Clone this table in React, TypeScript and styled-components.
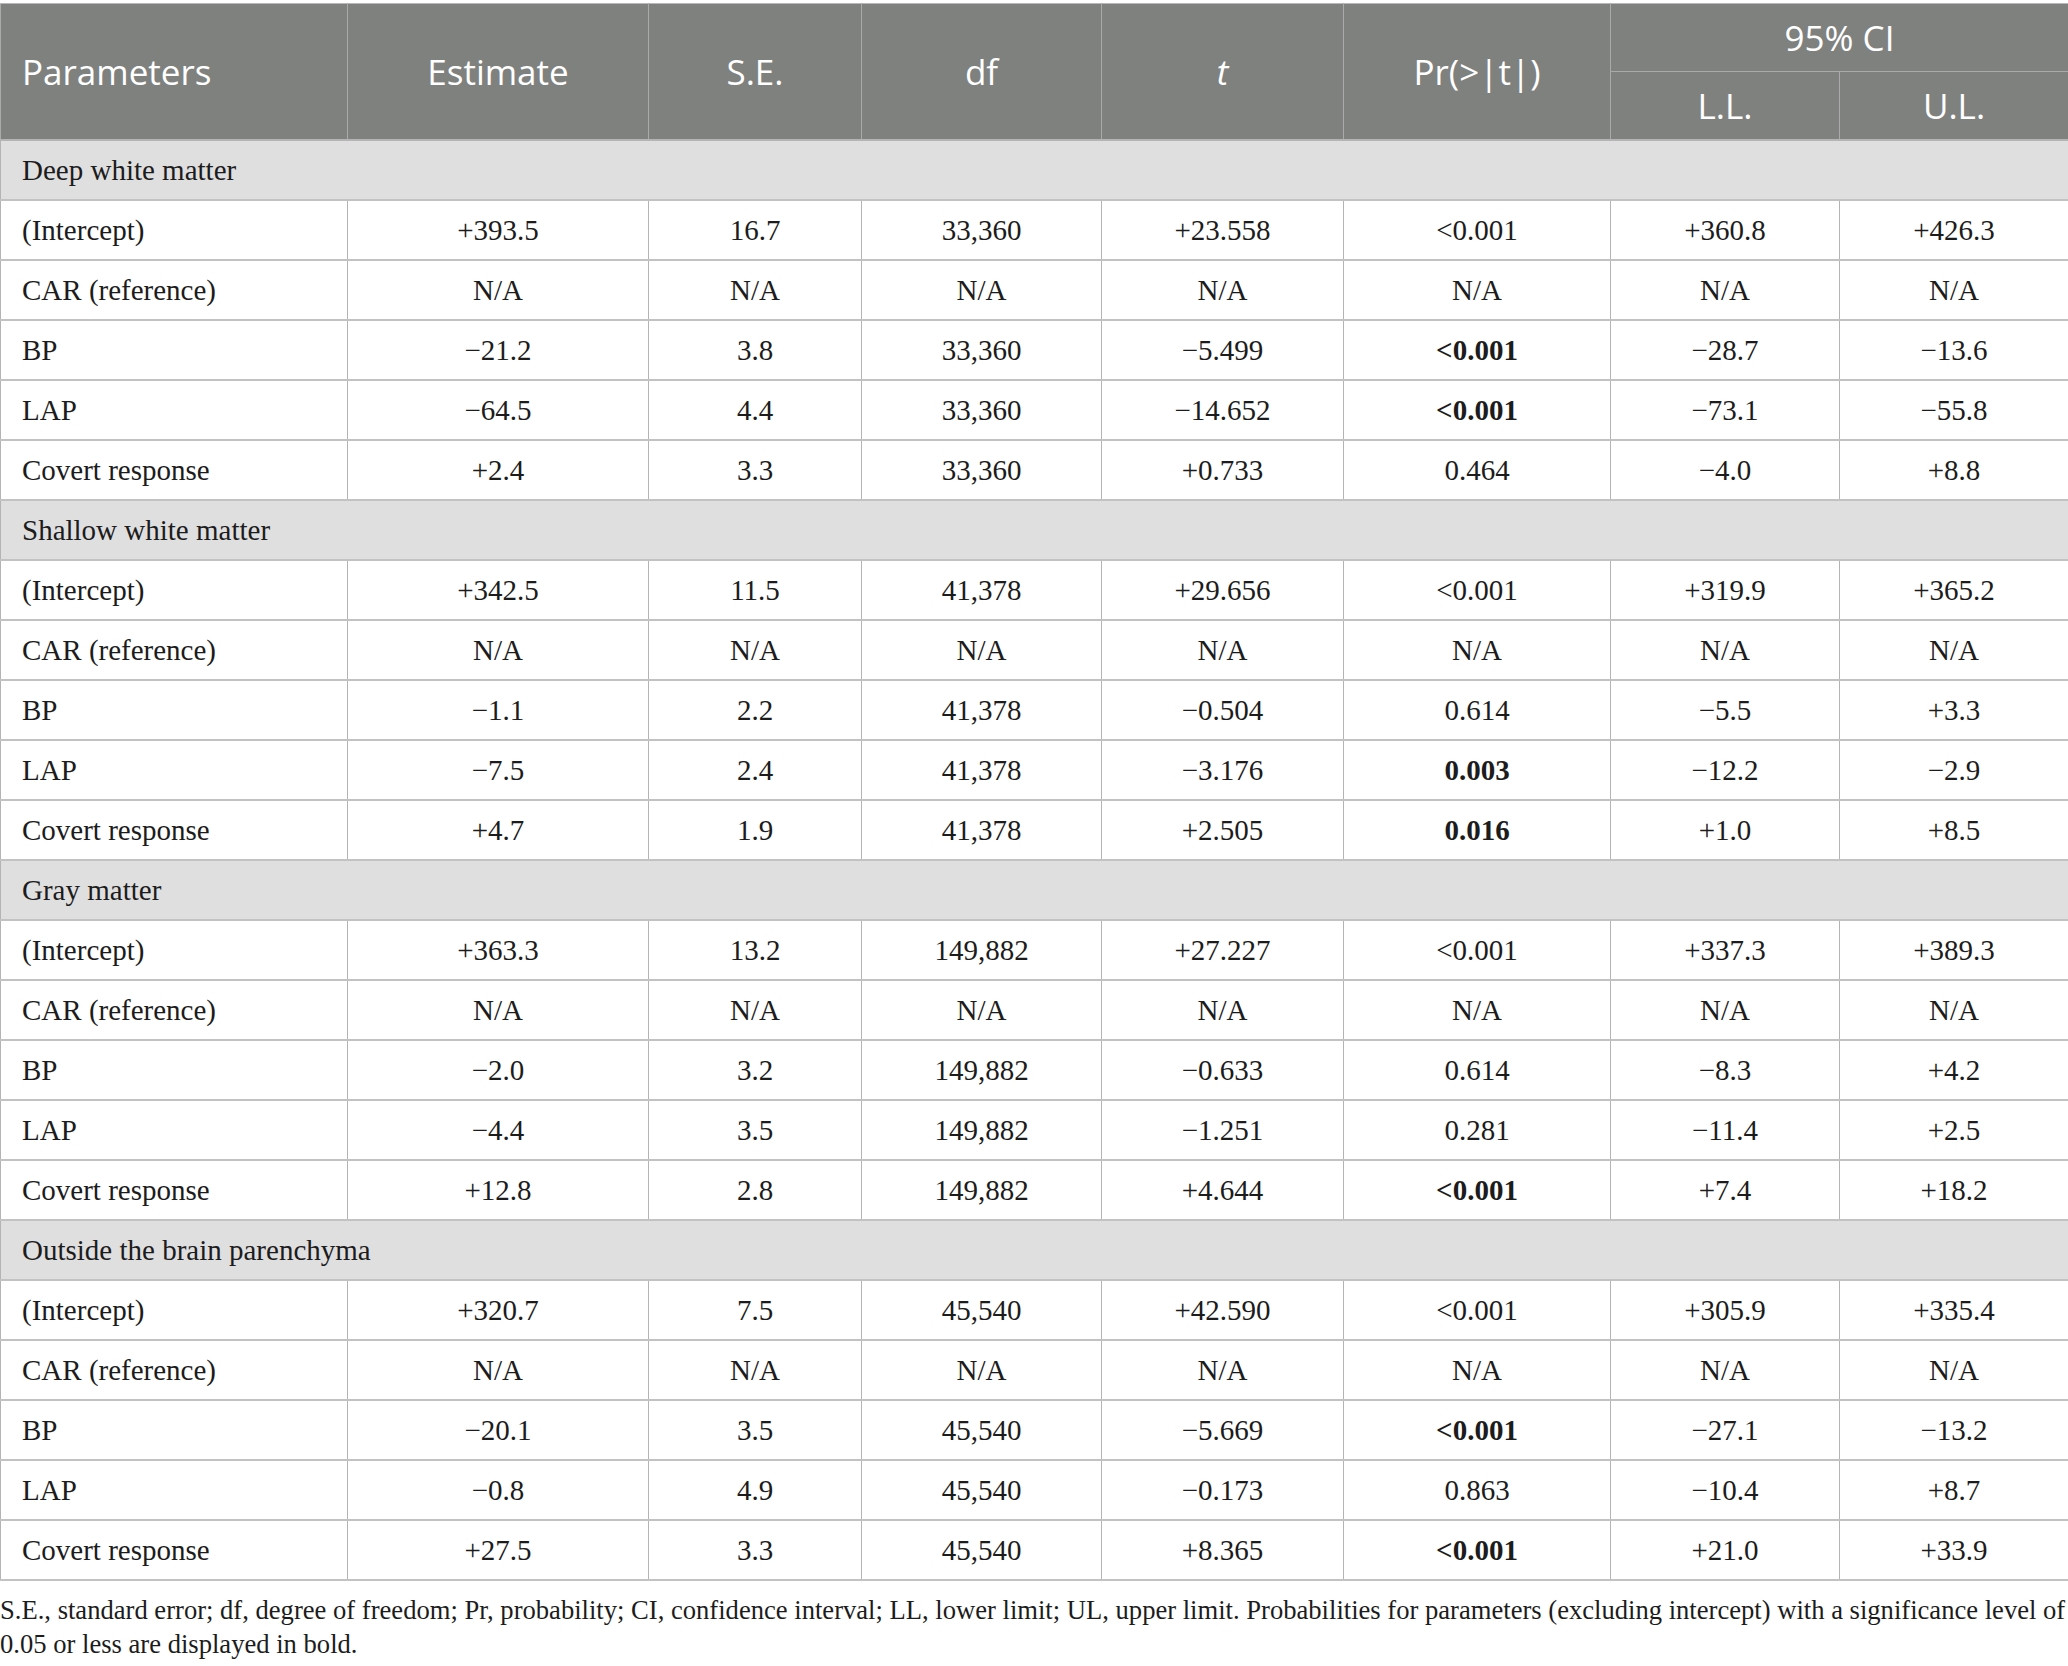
import React from "react";
import styled, { createGlobalStyle } from "styled-components";

const GlobalStyle = createGlobalStyle`
  html, body {
    margin: 0;
    padding: 0;
    background: #ffffff;
  }
`;

const Page = styled.div`
  width: 2068px;
  padding-top: 3px;
  background: #fff;
`;

const Table = styled.table`
  width: 2068px;
  border-collapse: collapse;
  table-layout: fixed;
  font-family: "Liberation Serif", "Times New Roman", serif;
  color: #1c1c1c;
`;

const HeadCell = styled.th<{ $left?: boolean; $italic?: boolean }>`
  background: #7f817f;
  color: #ffffff;
  font-family: "Open Sans", "Noto Sans", sans-serif;
  font-weight: 400;
  font-size: 35px;
  font-style: ${({ $italic }) => ($italic ? "italic" : "normal")};
  text-align: ${({ $left }) => ($left ? "left" : "center")};
  padding: 0 0 0 ${({ $left }) => ($left ? "21px" : "0")};
  border: 1px solid #a9aaa9;
  border-top-color: #b8b8b8;
  height: 67px;
  vertical-align: middle;
`;

const SectionRow = styled.tr`
  height: 60px;
`;

const SectionCell = styled.td`
  background: #e0dfe0;
  font-size: 29px;
  padding: 0 0 0 21px;
  border: 1px solid #b4b4b4;
  border-top-width: 2px;
  vertical-align: middle;
`;

const Row = styled.tr`
  height: 60px;
`;

const Cell = styled.td<{ $left?: boolean; $bold?: boolean }>`
  font-size: 29px;
  font-weight: ${({ $bold }) => ($bold ? 700 : 400)};
  text-align: ${({ $left }) => ($left ? "left" : "center")};
  padding: 0 0 0 ${({ $left }) => ($left ? "21px" : "0")};
  border-left: 1px solid #b4b4b4;
  border-right: 1px solid #b4b4b4;
  border-top: 2px solid #c2c2c2;
  border-bottom: 2px solid #c2c2c2;
  vertical-align: middle;
  white-space: nowrap;
`;

const Note = styled.p`
  margin: 12px 0 0 0;
  font-family: "Liberation Serif", "Times New Roman", serif;
  font-size: 26.6px;
  line-height: 34px;
  color: #1c1c1c;
  white-space: nowrap;
`;

type DataRow = {
  label: string;
  values: string[];
  boldP?: boolean;
};

type Section = {
  title: string;
  rows: DataRow[];
};

const NA = ["N/A", "N/A", "N/A", "N/A", "N/A", "N/A", "N/A"];

const sections: Section[] = [
  {
    title: "Deep white matter",
    rows: [
      { label: "(Intercept)", values: ["+393.5", "16.7", "33,360", "+23.558", "<0.001", "+360.8", "+426.3"] },
      { label: "CAR (reference)", values: NA },
      { label: "BP", values: ["\u221221.2", "3.8", "33,360", "\u22125.499", "<0.001", "\u221228.7", "\u221213.6"], boldP: true },
      { label: "LAP", values: ["\u221264.5", "4.4", "33,360", "\u221214.652", "<0.001", "\u221273.1", "\u221255.8"], boldP: true },
      { label: "Covert response", values: ["+2.4", "3.3", "33,360", "+0.733", "0.464", "\u22124.0", "+8.8"] },
    ],
  },
  {
    title: "Shallow white matter",
    rows: [
      { label: "(Intercept)", values: ["+342.5", "11.5", "41,378", "+29.656", "<0.001", "+319.9", "+365.2"] },
      { label: "CAR (reference)", values: NA },
      { label: "BP", values: ["\u22121.1", "2.2", "41,378", "\u22120.504", "0.614", "\u22125.5", "+3.3"] },
      { label: "LAP", values: ["\u22127.5", "2.4", "41,378", "\u22123.176", "0.003", "\u221212.2", "\u22122.9"], boldP: true },
      { label: "Covert response", values: ["+4.7", "1.9", "41,378", "+2.505", "0.016", "+1.0", "+8.5"], boldP: true },
    ],
  },
  {
    title: "Gray matter",
    rows: [
      { label: "(Intercept)", values: ["+363.3", "13.2", "149,882", "+27.227", "<0.001", "+337.3", "+389.3"] },
      { label: "CAR (reference)", values: NA },
      { label: "BP", values: ["\u22122.0", "3.2", "149,882", "\u22120.633", "0.614", "\u22128.3", "+4.2"] },
      { label: "LAP", values: ["\u22124.4", "3.5", "149,882", "\u22121.251", "0.281", "\u221211.4", "+2.5"] },
      { label: "Covert response", values: ["+12.8", "2.8", "149,882", "+4.644", "<0.001", "+7.4", "+18.2"], boldP: true },
    ],
  },
  {
    title: "Outside the brain parenchyma",
    rows: [
      { label: "(Intercept)", values: ["+320.7", "7.5", "45,540", "+42.590", "<0.001", "+305.9", "+335.4"] },
      { label: "CAR (reference)", values: NA },
      { label: "BP", values: ["\u221220.1", "3.5", "45,540", "\u22125.669", "<0.001", "\u221227.1", "\u221213.2"], boldP: true },
      { label: "LAP", values: ["\u22120.8", "4.9", "45,540", "\u22120.173", "0.863", "\u221210.4", "+8.7"] },
      { label: "Covert response", values: ["+27.5", "3.3", "45,540", "+8.365", "<0.001", "+21.0", "+33.9"], boldP: true },
    ],
  },
];

const colWidths = [347, 301, 213, 240, 242, 267, 229, 229];

const App: React.FC = () => {
  return (
    <Page>
      <GlobalStyle />
      <Table>
        <colgroup>
          {colWidths.map((w, i) => (
            <col key={i} style={{ width: w }} />
          ))}
        </colgroup>
        <thead>
          <tr>
            <HeadCell rowSpan={2} $left>Parameters</HeadCell>
            <HeadCell rowSpan={2}>Estimate</HeadCell>
            <HeadCell rowSpan={2}>S.E.</HeadCell>
            <HeadCell rowSpan={2}>df</HeadCell>
            <HeadCell rowSpan={2} $italic>t</HeadCell>
            <HeadCell rowSpan={2}>Pr(&gt;|t|)</HeadCell>
            <HeadCell colSpan={2}>95% CI</HeadCell>
          </tr>
          <tr>
            <HeadCell>L.L.</HeadCell>
            <HeadCell>U.L.</HeadCell>
          </tr>
        </thead>
        <tbody>
          {sections.map((section) => (
            <React.Fragment key={section.title}>
              <SectionRow>
                <SectionCell colSpan={8}>{section.title}</SectionCell>
              </SectionRow>
              {section.rows.map((row) => (
                <Row key={section.title + row.label}>
                  <Cell $left>{row.label}</Cell>
                  {row.values.map((v, i) => (
                    <Cell key={i} $bold={row.boldP && i === 4}>
                      {v}
                    </Cell>
                  ))}
                </Row>
              ))}
            </React.Fragment>
          ))}
        </tbody>
      </Table>
      <Note>
        S.E., standard error; df, degree of freedom; Pr, probability; CI, confidence interval; LL, lower limit; UL, upper limit. Probabilities for parameters (excluding intercept) with a significance level of
        <br />
        0.05 or less are displayed in bold.
      </Note>
    </Page>
  );
};

export default App;
